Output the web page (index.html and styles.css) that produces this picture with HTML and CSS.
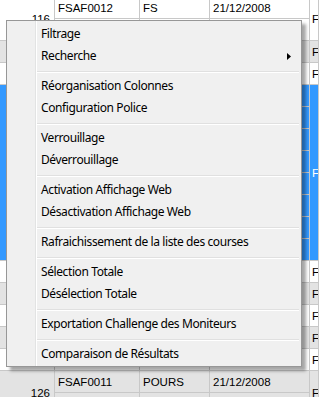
FILE: index.html
```html
<!DOCTYPE html>
<html lang="fr">
<head>
    <meta charset="UTF-8">
    <meta name="viewport" content="width=device-width, initial-scale=1.0">
    <title>Liste des courses</title>
    <link rel="stylesheet" href="styles.css">
</head>
<body>

    <div class="sheet">
        <!-- group 116 -->
        <div class="cell num tall">116</div>
        <div class="cell">FSAF0012</div>
        <div class="cell">FS</div>
        <div class="cell">21/12/2008</div>
        <div class="cell last tall">F</div>
        <div class="cell"></div>
        <div class="cell"></div>
        <div class="cell"></div>

        <div class="cell alt"></div>
        <div class="cell alt"></div>
        <div class="cell alt"></div>
        <div class="cell alt"></div>
        <div class="cell last alt">F</div>

        <div class="cell"></div>
        <div class="cell"></div>
        <div class="cell"></div>
        <div class="cell"></div>
        <div class="cell last">F</div>

        <!-- selected group -->
        <div class="cell sel block"></div>
        <div class="cell sel"></div><div class="cell sel"></div><div class="cell sel"></div>
        <div class="cell last sel block">F</div>
        <div class="cell sel"></div><div class="cell sel"></div><div class="cell sel"></div>
        <div class="cell sel"></div><div class="cell sel"></div><div class="cell sel"></div>
        <div class="cell sel"></div><div class="cell sel"></div><div class="cell sel"></div>
        <div class="cell sel"></div><div class="cell sel"></div><div class="cell sel"></div>
        <div class="cell sel"></div><div class="cell sel"></div><div class="cell sel"></div>
        <div class="cell sel"></div><div class="cell sel"></div><div class="cell sel"></div>
        <div class="cell sel"></div><div class="cell sel"></div><div class="cell sel"></div>

        <div class="cell"></div><div class="cell"></div><div class="cell"></div><div class="cell"></div><div class="cell last">F</div>
        <div class="cell alt"></div><div class="cell alt"></div><div class="cell alt"></div><div class="cell alt"></div><div class="cell last alt">F</div>
        <div class="cell"></div><div class="cell"></div><div class="cell"></div><div class="cell"></div><div class="cell last">F</div>
        <div class="cell alt"></div><div class="cell alt"></div><div class="cell alt"></div><div class="cell alt"></div><div class="cell last alt">F</div>
        <div class="cell"></div><div class="cell"></div><div class="cell"></div><div class="cell"></div><div class="cell last">F</div>

        <!-- group 126 -->
        <div class="cell num tall alt">126</div>
        <div class="cell alt">FSAF0011</div>
        <div class="cell alt">POURS</div>
        <div class="cell alt">21/12/2008</div>
        <div class="cell last tall alt">F</div>
        <div class="cell alt"></div>
        <div class="cell alt"></div>
        <div class="cell alt"></div>
    </div>

    <div class="menu">
        <div class="item">Filtrage</div>
        <div class="item">Recherche
            <svg class="arrow" width="4" height="7" viewBox="0 0 4 7"><path d="M0 0 L4 3.5 L0 7 Z" fill="#000"/></svg>
        </div>
        <div class="sep"></div>
        <div class="item">Réorganisation Colonnes</div>
        <div class="item">Configuration Police</div>
        <div class="sep"></div>
        <div class="item">Verrouillage</div>
        <div class="item">Déverrouillage</div>
        <div class="sep"></div>
        <div class="item">Activation Affichage Web</div>
        <div class="item">Désactivation Affichage Web</div>
        <div class="sep"></div>
        <div class="item">Rafraichissement de la liste des courses</div>
        <div class="sep"></div>
        <div class="item">Sélection Totale</div>
        <div class="item">Désélection Totale</div>
        <div class="sep"></div>
        <div class="item">Exportation Challenge des Moniteurs</div>
        <div class="sep"></div>
        <div class="item">Comparaison de Résultats</div>
    </div>

</body>
</html>
```

FILE: styles.css
```css
body {
    margin: 0;
    padding: 0;
    width: 319px;
    height: 397px;
    overflow: hidden;
    background-color: #fff;
    position: relative;
    font-family: "Liberation Sans", Arial, sans-serif;
}
.sheet {
    display: grid;
    grid-template-columns: 55px 85px 70px 100px 1fr;
    grid-auto-rows: 22px;
    margin-top: -3px;
    font-size: 11.5px;
    color: #000;
}
.cell {
    box-sizing: border-box;
    border-right: 1px solid #c8c8c8;
    border-bottom: 1px solid #c8c8c8;
    background-color: #fff;
    padding: 0 3px;
    display: flex;
    align-items: center;
    white-space: nowrap;
    overflow: hidden;
    min-width: 0;
}
.cell.last {
    padding: 0 0 0 2px;
}
.cell.tall {
    grid-row: span 2;
}
.cell.block {
    grid-row: span 8;
}
.cell.num {
    justify-content: flex-end;
    padding-right: 4px;
}
.cell.alt {
    background-color: #e3e3e3;
}
.cell.sel {
    background-color: #3399ff;
    color: #fff;
}

.menu {
    position: absolute;
    left: 6px;
    top: 20px;
    width: 296px;
    box-sizing: border-box;
    padding: 2px 0 1px;
    border: 1px solid #979797;
    background: linear-gradient(to right, #f0f0f0 28px, #e2e3e3 28px, #e2e3e3 29px, #fff 29px, #fff 30px, #f0f0f0 30px);
    box-shadow: 4px 4px 3px rgba(0, 0, 0, 0.35);
    font-family: "Noto Sans", "Open Sans", sans-serif;
    font-size: 12px;
    letter-spacing: -0.4px;
    color: #000;
}
.item {
    height: 22px;
    line-height: 22px;
    padding-left: 34px;
    display: flex;
    align-items: center;
    justify-content: space-between;
}
.item .arrow {
    margin-right: 10px;
}
.sep {
    height: 0;
    margin: 4px 2px 2px 30px;
    border-top: 1px solid #e0e0e0;
    border-bottom: 1px solid #fff;
}
```
